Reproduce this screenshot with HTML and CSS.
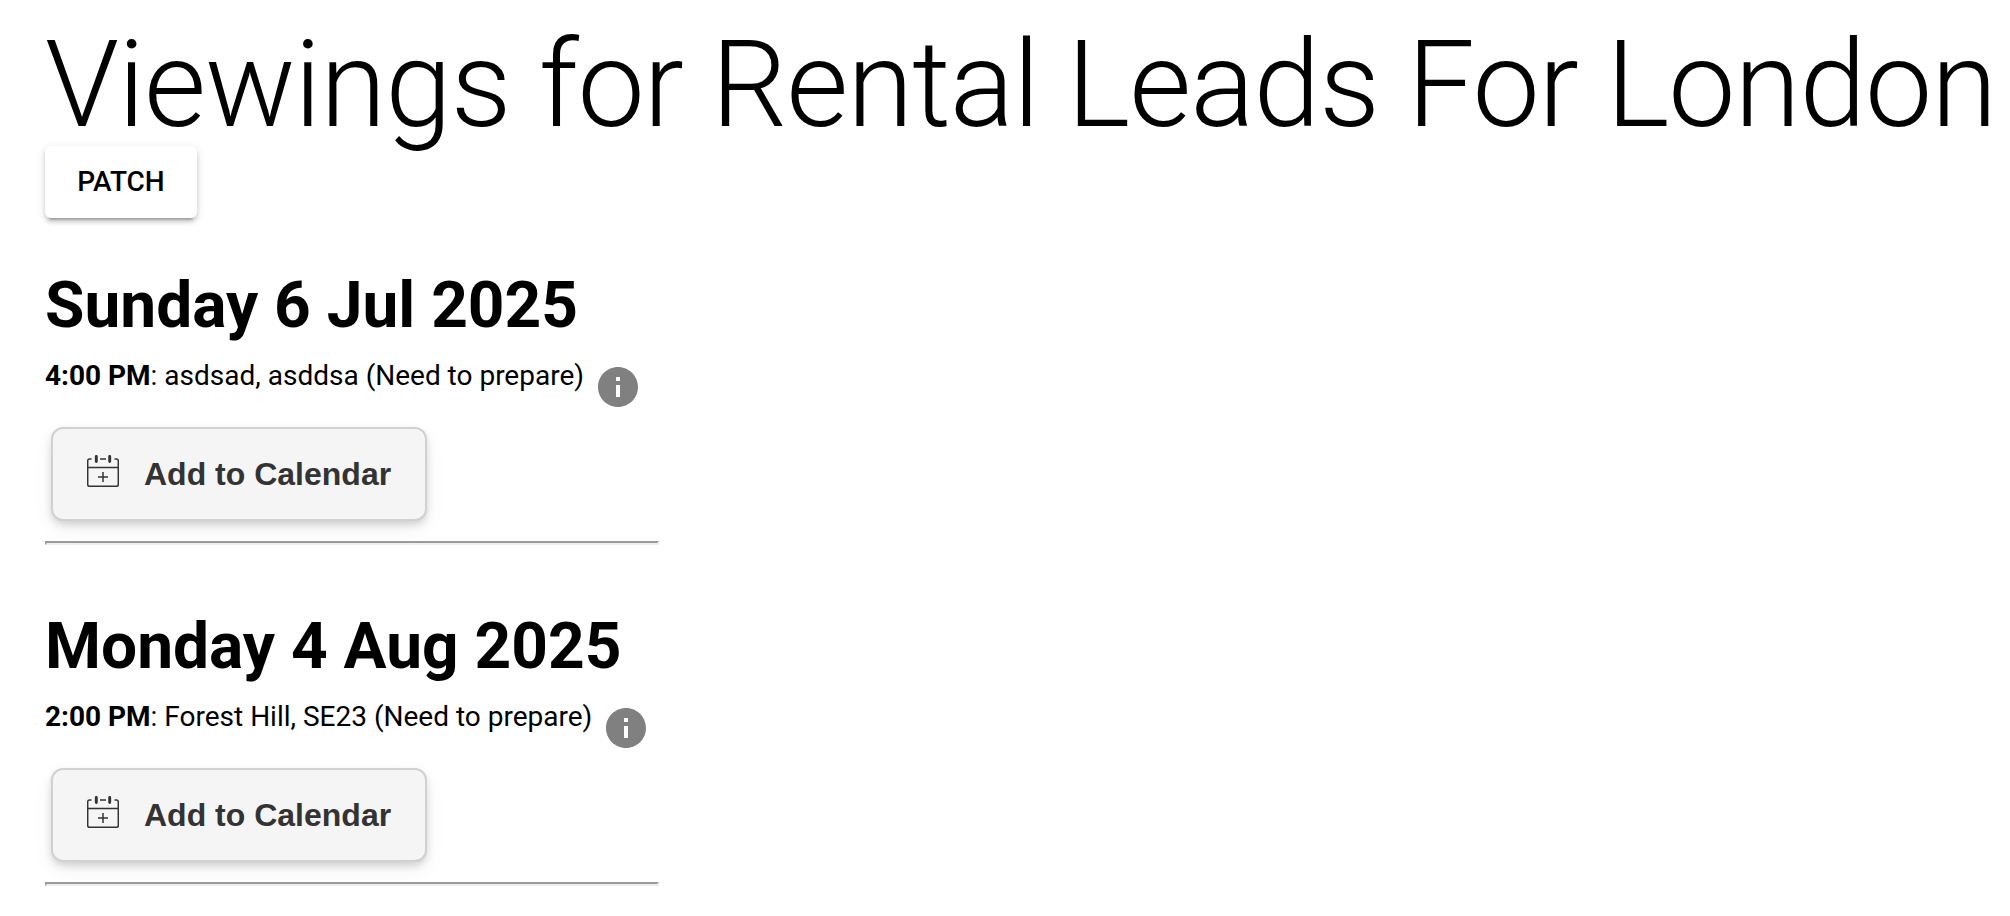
FILE: index.html
```html
<!DOCTYPE html>
<html lang="en">
<head>
<meta charset="utf-8">
<title>Viewings for Rental Leads For London</title>
<link rel="stylesheet" href="styles.css">
</head>
<body>
<svg class="sprite" aria-hidden="true">
  <symbol id="info" viewBox="0 0 24 24"><path d="M12 2C6.48 2 2 6.48 2 12s4.48 10 10 10 10-4.48 10-10S17.52 2 12 2zm1 15h-2v-6h2v6zm0-8h-2V7h2v2z"/></symbol>
  <symbol id="calendar" viewBox="0 0 32 32">
    <path d="M4.5 4H2.5A1.8 1.8 0 0 0 .7 5.800V29.500A1.800 1.800 0 0 0 2.500 31.300H29.500A1.800 1.800 0 0 0 31.300 29.500V5.800A1.800 1.800 0 0 0 29.500 4H27.500M13 4H19M.7 12.600H31.300M16 17V27M11 22H21" fill="none" stroke="currentColor" stroke-width="1.500"/>
    <path d="M9.300 1.400V6.600M22.700 1.400V6.600" fill="none" stroke="currentColor" stroke-width="2.900" stroke-linecap="round"/>
  </symbol>
</svg>
<main class="page">
  <h1 class="title">Viewings for Rental Leads For London</h1>
  <button class="patch" type="button">PATCH</button>
  <section class="day">
    <h2 class="date">Sunday 6 Jul 2025</h2>
    <div class="viewing"><span><b>4:00 PM</b>: asdsad, asddsa (Need to prepare)</span><svg class="info"><use href="#info"/></svg></div>
    <button class="calendar" type="button"><svg class="calendar-icon"><use href="#calendar"/></svg><span>Add to Calendar</span></button>
    <hr class="rule">
  </section>
  <section class="day">
    <h2 class="date">Monday 4 Aug 2025</h2>
    <div class="viewing"><span><b>2:00 PM</b>: Forest Hill, SE23 (Need to prepare)</span><svg class="info"><use href="#info"/></svg></div>
    <button class="calendar" type="button"><svg class="calendar-icon"><use href="#calendar"/></svg><span>Add to Calendar</span></button>
    <hr class="rule">
  </section>
</main>
</body>
</html>
```
FILE: styles.css
```css
* { box-sizing: border-box; }
body {
  margin: 0;
  background: #fff;
  color: #000;
  font-family: Roboto, sans-serif;
  font-size: 28px;
  overflow: hidden;
}
.sprite { display: none; }
.page {
  display: flex;
  flex-direction: column;
  align-items: flex-start;
  padding: 13px 0 0 45px;
}
.title {
  margin: 0 0 -11px;
  font-size: 120px;
  font-weight: 300;
  line-height: 144px;
  letter-spacing: -1.06px;
  white-space: nowrap;
}
.patch {
  width: 152px;
  height: 72px;
  padding: 0 0 2px;
  border: 0;
  border-radius: 6px;
  background: #fff;
  color: #000;
  font: 500 28px Roboto, sans-serif;
  box-shadow: 0 6px 2px -4px rgba(0,0,0,.2), 0 4px 4px rgba(0,0,0,.14), 0 2px 10px rgba(0,0,0,.12);
}
.day {
  width: 614px;
  height: 341px;
  padding-top: 49px;
}
.date {
  margin: 0;
  font-size: 64px;
  font-weight: 700;
  line-height: 77px;
  white-space: nowrap;
}
.viewing {
  display: flex;
  align-items: flex-start;
  height: 83px;
  gap: 9.5px;
  padding-top: 15px;
  line-height: 33px;
  white-space: nowrap;
}
.info {
  width: 48px;
  height: 48px;
  margin-top: 4px;
  fill: #808080;
}
.calendar {
  display: flex;
  align-items: center;
  gap: 25px;
  width: 376px;
  height: 94px;
  margin-left: 6px;
  padding: 0 0 0 34px;
  border: 2px solid #d1d1d1;
  border-radius: 12px;
  background: #f5f5f5;
  color: #333;
  font: 700 32px "Liberation Sans", Arial, sans-serif;
  box-shadow: 0 4px 8px -1px rgba(0,0,0,.17), 0 8px 24px -4px rgba(0,0,0,.08);
}
.calendar-icon {
  width: 32px;
  height: 32px;
  margin-top: -6px;
}
.rule {
  width: 614px;
  height: 4px;
  margin: 20px 0 0;
  border: 2px solid;
  border-color: #9a9a9a #eee #eee #9a9a9a;
}
```
